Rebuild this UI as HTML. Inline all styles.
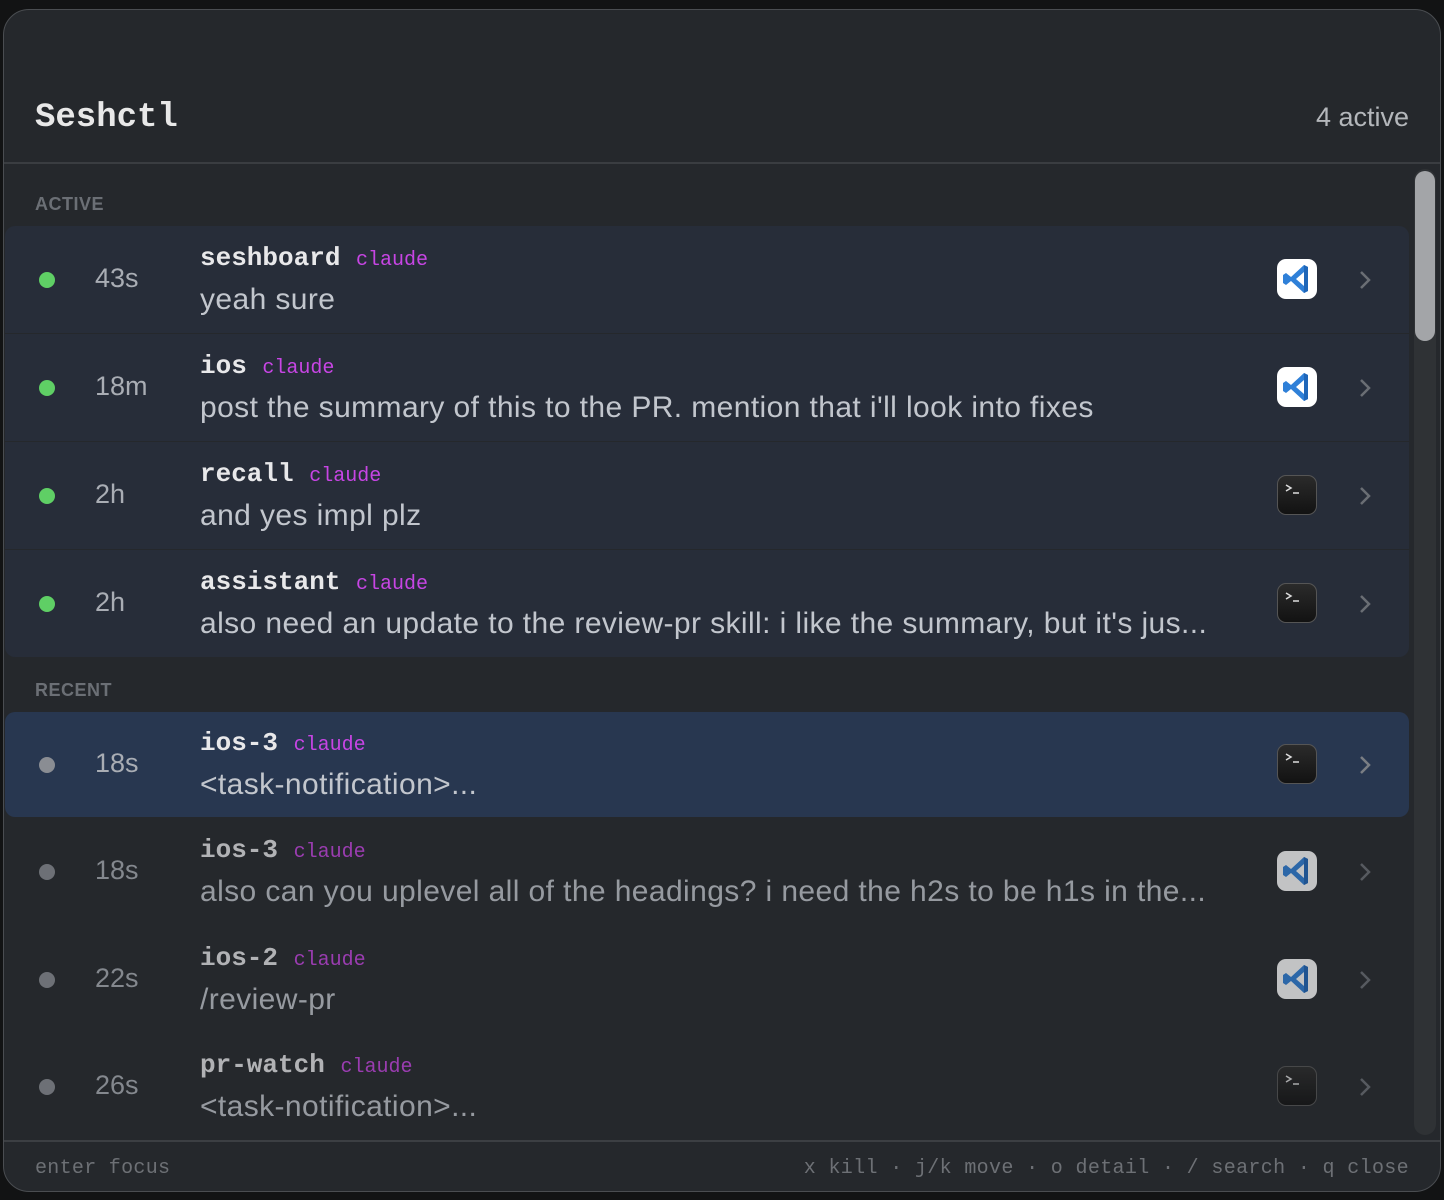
<!DOCTYPE html>
<html><head><meta charset="utf-8"><style>
*{margin:0;padding:0;box-sizing:border-box}
body{width:1444px;height:1200px;background:#121314;position:relative;overflow:hidden;font-family:"Liberation Sans",sans-serif}
.win{position:absolute;left:3px;top:9px;width:1438px;height:1183px;background:#25282c;border-radius:26px;border:1px solid #4a4d51;overflow:hidden}
.abs{position:absolute}
.title{left:31px;top:89px;font:bold 34px "Liberation Mono",monospace;color:#e8e8e8}
.count{right:31px;top:92px;font-size:27px;color:#b4b7bb}
.sep{left:0;right:0;height:2px;background:#3a3d41}
.lbl{left:31px;font-weight:bold;font-size:18px;color:#6b6f75;letter-spacing:.5px}
.row{position:absolute;left:1px;width:1404px;height:107px}
.row.act{background:#272d39}
.row.sel{background:#283750;border-radius:10px}
.dot{position:absolute;left:34px;top:46px;width:16px;height:16px;border-radius:50%;background:#5fcf65}
.time{position:absolute;left:90px;top:37px;font-size:27px;color:#a9adb4}
.name{position:absolute;left:195px;top:17px;font:bold 26px "Liberation Mono",monospace;color:#e8e8ea;white-space:nowrap}
.name span{font:20px "Liberation Mono",monospace;color:#c745e4}
.msg{position:absolute;left:195px;top:57px;font-size:30px;letter-spacing:.4px;color:#c2c6cd;white-space:nowrap}
.ic{position:absolute;left:1272px;top:33px;width:40px;height:40px;border-radius:9px}
.vs{background:#fff}
.term{background:linear-gradient(#2b2b2b,#121212);border:1px solid #555}
.chev{position:absolute;left:1353px;top:43px}
.dim{opacity:.72}
.dim .dot,.sel .dot{background:#8a8d93}
</style></head><body>
<div class="win">
<div class="abs title">Seshctl</div>
<div class="abs count">4 active</div>
<div class="abs sep" style="top:152px"></div>
<div class="abs lbl" style="top:184px">ACTIVE</div>

<div class="row act" style="top:216px;border-radius:10px 10px 0 0"><div class="dot"></div><div class="time">43s</div><div class="name">seshboard <span>claude</span></div><div class="msg">yeah sure</div><div class="ic vs"><svg width="40" height="40" viewBox="0 0 40 40"><path d="M27 6 L31 8 V32 L27 34 L14 22 L9 26 L6 24 V16 L9 14 L14 18 Z M27 13 L19 20 L27 27 Z" fill="#2f80d8"/><path d="M27 6 L31 8 V32 L27 34Z" fill="#1f66b8"/></svg></div><svg class="chev" width="14" height="22" viewBox="0 0 14 22"><path d="M3 3 L11 11 L3 19" stroke="#6a6e74" stroke-width="2.5" fill="none"/></svg></div>

<div class="row act" style="top:324px"><div class="dot"></div><div class="time">18m</div><div class="name">ios <span>claude</span></div><div class="msg">post the summary of this to the PR. mention that i'll look into fixes</div><div class="ic vs"><svg width="40" height="40" viewBox="0 0 40 40"><path d="M27 6 L31 8 V32 L27 34 L14 22 L9 26 L6 24 V16 L9 14 L14 18 Z M27 13 L19 20 L27 27 Z" fill="#2f80d8"/><path d="M27 6 L31 8 V32 L27 34Z" fill="#1f66b8"/></svg></div><svg class="chev" width="14" height="22" viewBox="0 0 14 22"><path d="M3 3 L11 11 L3 19" stroke="#6a6e74" stroke-width="2.5" fill="none"/></svg></div>

<div class="row act" style="top:432px"><div class="dot"></div><div class="time">2h</div><div class="name">recall <span>claude</span></div><div class="msg">and yes impl plz</div><div class="ic term"><svg width="38" height="38"><path d="M8 9 L13 12 L8 15" stroke="#ddd" stroke-width="1.5" fill="none"/><path d="M15 17 H21" stroke="#ddd" stroke-width="1.5"/></svg></div><svg class="chev" width="14" height="22" viewBox="0 0 14 22"><path d="M3 3 L11 11 L3 19" stroke="#6a6e74" stroke-width="2.5" fill="none"/></svg></div>

<div class="row act" style="top:540px;border-radius:0 0 10px 10px"><div class="dot"></div><div class="time">2h</div><div class="name">assistant <span>claude</span></div><div class="msg">also need an update to the review-pr skill: i like the summary, but it's jus...</div><div class="ic term"><svg width="38" height="38"><path d="M8 9 L13 12 L8 15" stroke="#ddd" stroke-width="1.5" fill="none"/><path d="M15 17 H21" stroke="#ddd" stroke-width="1.5"/></svg></div><svg class="chev" width="14" height="22" viewBox="0 0 14 22"><path d="M3 3 L11 11 L3 19" stroke="#6a6e74" stroke-width="2.5" fill="none"/></svg></div>

<div class="abs lbl" style="top:670px">RECENT</div>

<div class="row sel" style="top:702px;height:105px"><div class="dot" style="top:45px"></div><div class="time" style="top:36px">18s</div><div class="name" style="top:16px">ios-3 <span>claude</span></div><div class="msg" style="top:56px">&lt;task-notification&gt;...</div><div class="ic term" style="top:32px"><svg width="38" height="38"><path d="M8 9 L13 12 L8 15" stroke="#ddd" stroke-width="1.5" fill="none"/><path d="M15 17 H21" stroke="#ddd" stroke-width="1.5"/></svg></div><svg class="chev" style="top:42px" width="14" height="22" viewBox="0 0 14 22"><path d="M3 3 L11 11 L3 19" stroke="#7a7e84" stroke-width="2.5" fill="none"/></svg></div>

<div class="row dim" style="top:808px"><div class="dot"></div><div class="time">18s</div><div class="name">ios-3 <span>claude</span></div><div class="msg">also can you uplevel all of the headings? i need the h2s to be h1s in the...</div><div class="ic vs"><svg width="40" height="40" viewBox="0 0 40 40"><path d="M27 6 L31 8 V32 L27 34 L14 22 L9 26 L6 24 V16 L9 14 L14 18 Z M27 13 L19 20 L27 27 Z" fill="#2f80d8"/><path d="M27 6 L31 8 V32 L27 34Z" fill="#1f66b8"/></svg></div><svg class="chev" width="14" height="22" viewBox="0 0 14 22"><path d="M3 3 L11 11 L3 19" stroke="#6a6e74" stroke-width="2.5" fill="none"/></svg></div>

<div class="row dim" style="top:916px"><div class="dot"></div><div class="time">22s</div><div class="name">ios-2 <span>claude</span></div><div class="msg">/review-pr</div><div class="ic vs"><svg width="40" height="40" viewBox="0 0 40 40"><path d="M27 6 L31 8 V32 L27 34 L14 22 L9 26 L6 24 V16 L9 14 L14 18 Z M27 13 L19 20 L27 27 Z" fill="#2f80d8"/><path d="M27 6 L31 8 V32 L27 34Z" fill="#1f66b8"/></svg></div><svg class="chev" width="14" height="22" viewBox="0 0 14 22"><path d="M3 3 L11 11 L3 19" stroke="#6a6e74" stroke-width="2.5" fill="none"/></svg></div>

<div class="row dim" style="top:1023px"><div class="dot"></div><div class="time">26s</div><div class="name">pr-watch <span>claude</span></div><div class="msg">&lt;task-notification&gt;...</div><div class="ic term"><svg width="38" height="38"><path d="M8 9 L13 12 L8 15" stroke="#ddd" stroke-width="1.5" fill="none"/><path d="M15 17 H21" stroke="#ddd" stroke-width="1.5"/></svg></div><svg class="chev" width="14" height="22" viewBox="0 0 14 22"><path d="M3 3 L11 11 L3 19" stroke="#6a6e74" stroke-width="2.5" fill="none"/></svg></div>

<div class="abs" style="left:1410px;top:159px;width:22px;height:966px;background:#2f3235;border-radius:11px"></div>
<div class="abs" style="left:1411px;top:161px;width:20px;height:170px;background:#a3a5a8;border-radius:10px"></div>

<div class="abs sep" style="top:1130px;background:#3c3f43"></div>
<div class="abs" style="left:31px;top:1147px;font:20px 'Liberation Mono',monospace;color:#6d7075;letter-spacing:.3px">enter focus</div>
<div class="abs" style="right:31px;top:1147px;font:20px 'Liberation Mono',monospace;color:#6d7075;white-space:pre;letter-spacing:.35px">x kill · j/k move · o detail · / search · q close</div>
</div>
</body></html>
